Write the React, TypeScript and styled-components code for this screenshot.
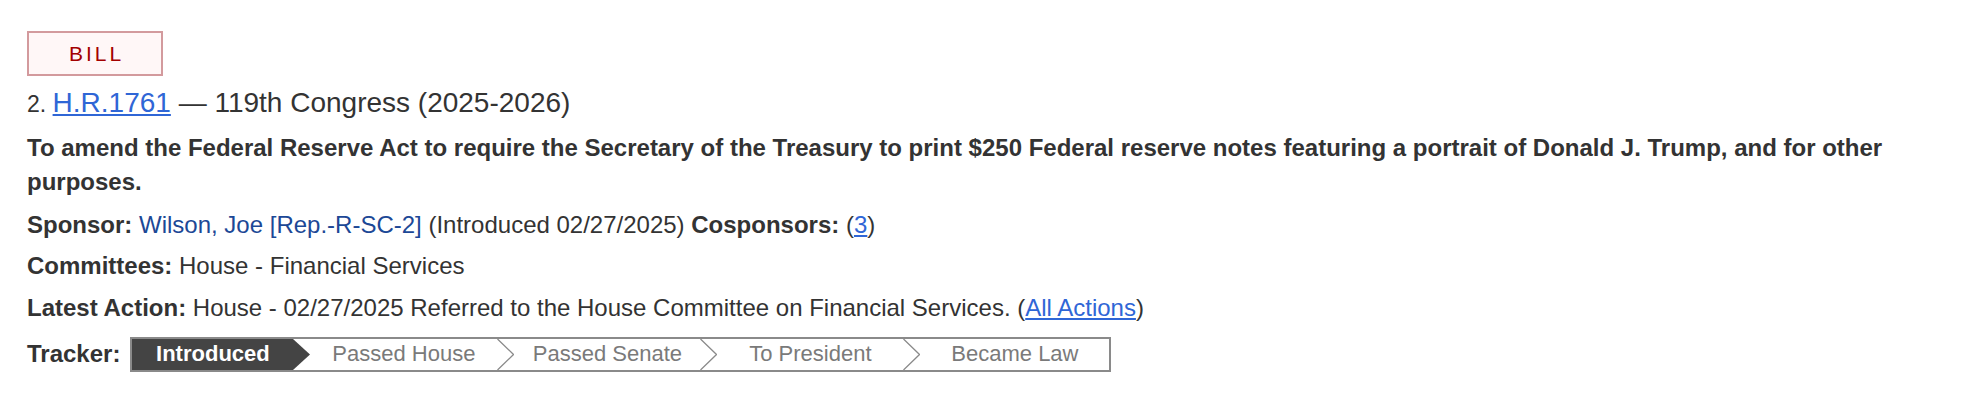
import { FC } from 'react';
import styled, { createGlobalStyle } from 'styled-components';

const GlobalStyle = createGlobalStyle`
  html, body {
    margin: 0;
    padding: 0;
    background: #ffffff;
  }
  body {
    font-family: 'Liberation Sans', Arial, Helvetica, sans-serif;
    color: #333333;
  }
`;

const Page = styled.div`
  width: 1966px;
  height: 402px;
  box-sizing: border-box;
  padding: 31px 27px 0 27px;
  overflow: hidden;
`;

const Badge = styled.div`
  width: 136px;
  height: 45px;
  box-sizing: border-box;
  display: flex;
  align-items: center;
  justify-content: center;
  border: 2px solid #d39a9d;
  background-color: #fff7f7;
  color: #a30000;
  font-size: 21px;
  letter-spacing: 3px;
  padding-left: 3px;
`;

const Title = styled.div`
  margin-top: 12px;
  font-size: 28px;
  line-height: 30px;
  > small {
    font-size: 23px;
  }
`;

const Link = styled.a<{ $plain?: boolean }>`
  color: ${p => (p.$plain ? '#1c4896' : '#2f66d6')};
  text-decoration: ${p => (p.$plain ? 'none' : 'underline')};
  text-underline-offset: 2px;
`;

const Description = styled.div`
  margin-top: 12px;
  font-size: 24px;
  line-height: 33.8px;
  font-weight: bold;
`;

const Row = styled.div`
  margin-top: 11.4px;
  font-size: 24px;
  line-height: 30px;
  > b {
    font-weight: bold;
  }
`;

const TrackerRow = styled.div`
  margin-top: 14px;
  display: flex;
  align-items: center;
  gap: 10px;
  font-size: 24px;
  > b {
    font-weight: bold;
  }
`;

const TrackerBar = styled.div`
  display: flex;
  height: 35px;
  box-sizing: border-box;
  border: 2px solid #8a8a8a;
  background: #ffffff;
`;

const Step = styled.div<{ $width: number }>`
  display: flex;
  width: ${p => p.$width}px;
  height: 100%;
  flex: none;
`;

const StepLabel = styled.div<{ $active?: boolean }>`
  flex: 1;
  display: flex;
  align-items: center;
  justify-content: center;
  background: ${p => (p.$active ? '#444444' : 'transparent')};
  color: ${p => (p.$active ? '#ffffff' : '#7a7a7a')};
  font-weight: ${p => (p.$active ? 'bold' : 'normal')};
  font-size: 22px;
  white-space: nowrap;
`;

const Chevron = styled.svg`
  flex: none;
  width: 17px;
  height: 100%;
  display: block;
`;

type TStep = { label: string; width: number; active?: boolean; last?: boolean };

const steps: TStep[] = [
  { label: 'Introduced', width: 178, active: true },
  { label: 'Passed House', width: 204 },
  { label: 'Passed Senate', width: 203 },
  { label: 'To President', width: 203 },
  { label: 'Became Law', width: 189, last: true },
];

const TrackerStep: FC<TStep> = ({ label, width, active, last }) => (
  <Step $width={width}>
    <StepLabel $active={active}>{label}</StepLabel>
    {!last && (
      <Chevron viewBox="0 0 17 31" preserveAspectRatio="none">
        {active ? (
          <polygon points="0,0 17,15.5 0,31" fill="#444444" />
        ) : (
          <polyline points="0.5,0 16.5,15.5 0.5,31" fill="none" stroke="#8a8a8a" strokeWidth="1.3" />
        )}
      </Chevron>
    )}
  </Step>
);

const App: FC = () => (
  <>
    <GlobalStyle />
    <Page>
      <Badge>BILL</Badge>
      <Title>
        <small>2. </small>
        <Link href="#">H.R.1761</Link> — 119th Congress (2025-2026)
      </Title>
      <Description>
        To amend the Federal Reserve Act to require the Secretary of the Treasury to print $250 Federal
        reserve notes featuring a portrait of Donald J. Trump, and for other purposes.
      </Description>
      <Row>
        <b>Sponsor:</b>{' '}
        <Link href="#" $plain>
          Wilson, Joe [Rep.-R-SC-2]
        </Link>{' '}
        (Introduced 02/27/2025) <b>Cosponsors:</b> (<Link href="#">3</Link>)
      </Row>
      <Row>
        <b>Committees:</b> House - Financial Services
      </Row>
      <Row>
        <b>Latest Action:</b> House - 02/27/2025 Referred to the House Committee on Financial Services. (
        <Link href="#">All Actions</Link>)
      </Row>
      <TrackerRow>
        <b>Tracker:</b>
        <TrackerBar>
          {steps.map(s => (
            <TrackerStep key={s.label} {...s} />
          ))}
        </TrackerBar>
      </TrackerRow>
    </Page>
  </>
);

export default App;
